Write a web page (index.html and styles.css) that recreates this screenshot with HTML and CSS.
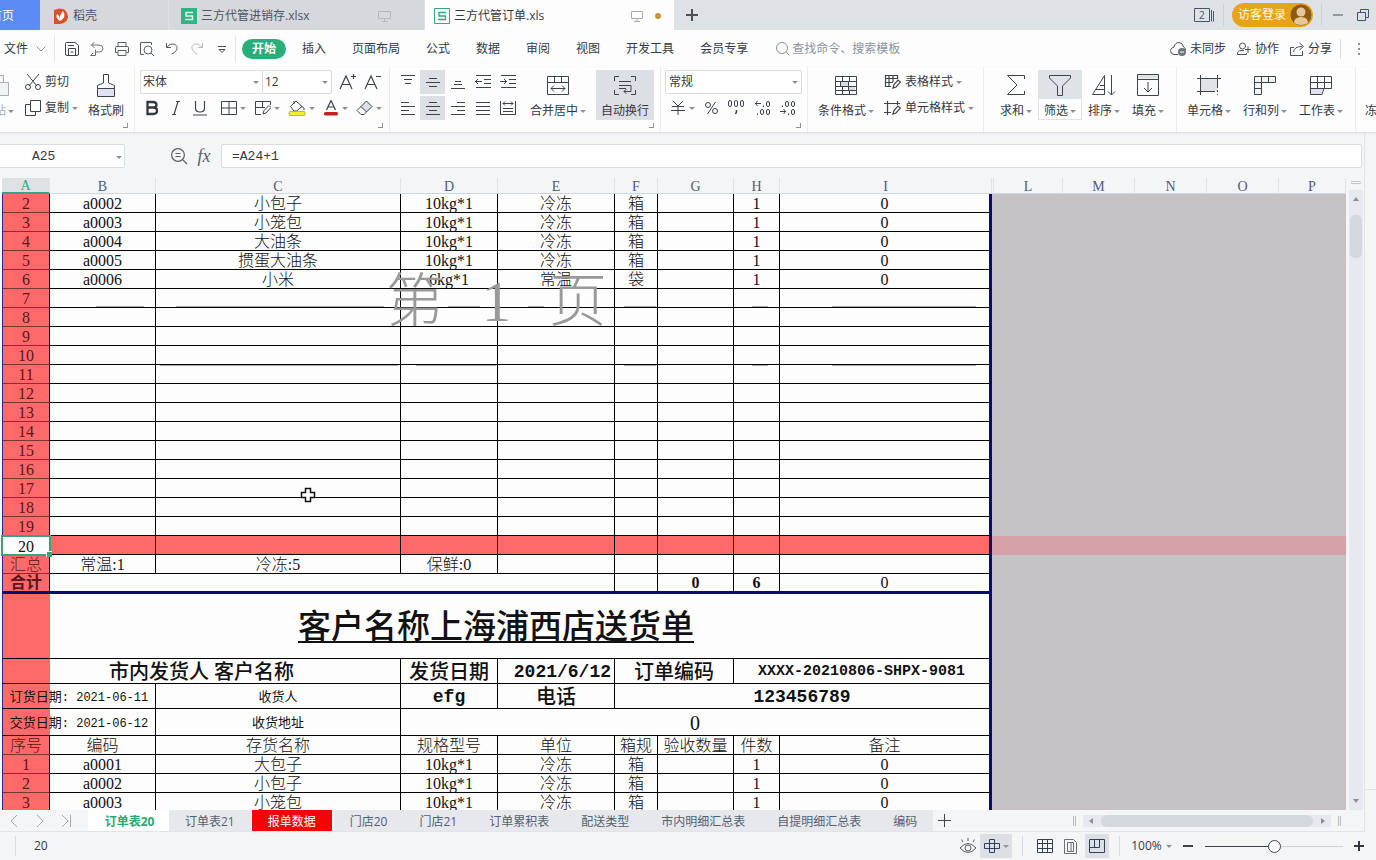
FILE: index.html
```html
<!DOCTYPE html>
<html lang="zh-CN">
<head>
<meta charset="utf-8">
<title>三方代管订单.xls</title>
<link rel="stylesheet" href="styles.css">
</head>
<body>
<header class="titlebar">
  <button class="doc-tab home">首页</button>
  <button class="doc-tab docer">
    <svg width="14" height="16" viewBox="0 0 14 16"><path d="M0 2Q7-1 11 2Q14 5 14 9Q13 15 6 16H0z" fill="#d9512c"/><path d="M6 13Q1 10 3 6Q6 8 6 13Q5 7 9 3Q13 9 6 13" fill="#fff"/></svg>
    <span>稻壳</span>
  </button>
  <button class="doc-tab book">
    <svg width="16" height="16" viewBox="0 0 16 16"><path d="M0 0H16V16H0z" fill="#2bb683"/><path d="M12 4.500H5V8H11.500V11.500H4" fill="none" stroke="#dff6ec" stroke-width="1.500"/></svg>
    <span>三方代管进销存.xlsx</span>
    <svg class="screen" width="13" height="12" viewBox="0 0 13 12"><path d="M.5 1.500H12.500V8.500H.5zM6.500 8.500V11M3.500 11.500H9.500" fill="none" stroke="#b3b8bf"/></svg>
  </button>
  <button class="doc-tab book current">
    <svg width="16" height="16" viewBox="0 0 16 16"><path d="M.5.500H15.500V15.500H.5z" fill="#f4fffa" stroke="#37a583"/><path d="M12 4.500H5V8H11.500V11.500H4" fill="none" stroke="#37a583" stroke-width="1.300"/></svg>
    <span>三方代管订单.xls</span>
    <svg class="screen" width="13" height="12" viewBox="0 0 13 12"><path d="M.5 1.500H11.500V8.500H.5zM6 8.500V11M3 11.500H9" fill="none" stroke="#a9adb3"/></svg>
    <i class="unsaved"></i>
  </button>
  <button class="icon-btn new-tab" aria-label="新建"><svg width="12" height="12" viewBox="0 0 12 12"><path d="M6 0V12M0 6H12" stroke="#4c5158" stroke-width="2"/></svg></button>
  <div class="window-tools">
    <button class="icon-btn" aria-label="窗口"><svg width="21" height="15" viewBox="0 0 21 15"><path d="M.5.500H15.500V13.500H.5zM17.500 2V13.500M19.500 3V13.500" fill="none" stroke="#4a5468"/><text x="5" y="11" font-size="10" fill="#4a5468">2</text></svg></button>
    <i class="rule short"></i>
    <button class="login">访客登录<svg width="22" height="22" viewBox="0 0 22 22"><circle cx="11" cy="11" r="10.500" fill="#8c5a10"/><circle cx="11" cy="8" r="4.500" fill="#e6c69a"/><path d="M4 19Q4 13 11 13Q18 13 18 19Q11 23 4 19" fill="#e6c69a"/></svg></button>
    <i class="rule short last"></i>
    <button class="icon-btn min" aria-label="最小化"><svg width="10" height="2"><path d="M0 1H10" stroke="#4c5158"/></svg></button>
    <button class="icon-btn restore" aria-label="还原"><svg width="12" height="12" viewBox="0 0 12 12"><path d="M.5 3.500H8.500V11.500H.5zM3.500 3V.5H11.500V8.500H9" fill="none" stroke="#44507a"/></svg></button>
  </div>
</header>

<nav class="menubar">
  <button class="menu file">文件<svg width="10" height="6" viewBox="0 0 10 6"><path d="M.5.500L5 5L9.500.5" fill="none" stroke="#9298a1"/></svg></button>
  <div class="quick">
    <button class="icon-btn" aria-label="保存"><svg width="16" height="16" viewBox="0 0 16 16"><path d="M1.500 4V2.500Q1.500 1.500 2.500 1.500H11L14.500 4.500V13Q14.500 14.500 13 14.500H3Q1.500 14.500 1.500 13zM4.500 14V7.500H11.500V14M4 4.500H10M6.500 11H9.500" fill="none" stroke="#3e444d"/></svg></button>
    <button class="icon-btn" aria-label="导出"><svg width="16" height="16" viewBox="0 0 16 16"><path d="M5.500 1L2.500 4L5.500 7M2.500 4H10Q14 4 14 7.500T10 11H6.500V8.500M6.500 11V14.500H1.500M4 12L1.500 14.500" fill="none" stroke="#6c7179"/></svg></button>
    <button class="icon-btn" aria-label="打印"><svg width="16" height="16" viewBox="0 0 16 16"><path d="M4 5V1.500H12V5M3.500 11.500H1.500V6.500Q1.500 5.500 3 5.500H13Q14.500 5.500 14.500 6.500V11.500H12.500M4 9.500H12V14.500H4z" fill="none" stroke="#5b6068"/></svg></button>
    <button class="icon-btn" aria-label="预览"><svg width="16" height="16" viewBox="0 0 16 16"><path d="M5 13.500H1.500V1.500H12.500V4M12 12L15 15" fill="none" stroke="#5b6068"/><circle cx="9" cy="9" r="4" fill="none" stroke="#5b6068"/></svg></button>
    <button class="icon-btn" aria-label="撤销"><svg width="16" height="16" viewBox="0 0 16 16"><path d="M2.500 2V6.500H7M2.500 6.500Q6 2 10 3Q14.500 5 12.500 9Q11 12 7.500 13" fill="none" stroke="#5b6068"/></svg></button>
    <button class="icon-btn" aria-label="恢复"><svg width="16" height="16" viewBox="0 0 16 16"><path d="M13.500 2V6.500H9M13.500 6.500Q10 2 6 3Q1.500 5 3.500 9Q5 12 8.500 13" fill="none" stroke="#b8bcc2"/></svg></button>
    <button class="icon-btn" aria-label="更多"><svg width="16" height="16" viewBox="0 0 16 16"><path d="M4 5.500H12M5 8.500L8 11.500L11 8.500z" fill="none" stroke="#4c5158"/></svg></button>
  </div>
  <button class="menu start">开始</button>
  <button class="menu">插入</button>
  <button class="menu">页面布局</button>
  <button class="menu">公式</button>
  <button class="menu">数据</button>
  <button class="menu">审阅</button>
  <button class="menu">视图</button>
  <button class="menu">开发工具</button>
  <button class="menu">会员专享</button>
  <label class="search"><svg width="14" height="14" viewBox="0 0 14 14"><circle cx="6" cy="6" r="5.500" fill="none" stroke="#8a909a"/><path d="M10 10L13.500 13.500" stroke="#8a909a"/></svg><input type="text" placeholder="查找命令、搜索模板" aria-label="查找命令"></label>
  <div class="share">
    <button class="menu"><svg width="17" height="14" viewBox="0 0 17 14"><path d="M8 12.500H4Q.5 12 .5 8.500Q1 5.500 4 5Q5 .5 9 .5Q13 1 13.500 5Q16 6 15.500 8.500" fill="none" stroke="#4c5158"/><circle cx="12" cy="10" r="4" fill="#6f747b"/><path d="M10 10H14" stroke="#fff"/></svg>未同步</button>
    <button class="menu"><svg width="15" height="14" viewBox="0 0 15 14"><circle cx="5.500" cy="4" r="3" fill="none" stroke="#4c5158"/><path d="M.5 12.500Q0 8.500 4 8.500H7M.5 12.500H9.500V11M11 4.500V11M8 7.500H14" fill="none" stroke="#4c5158"/></svg>协作</button>
    <button class="menu"><svg width="15" height="14" viewBox="0 0 15 14"><path d="M4 5.500H.5V13.500H12.500V9M3.500 10Q4 4.500 12 4.500M9.500 1L13.500 4.500L9.500 8" fill="none" stroke="#4c5158"/></svg>分享</button>
    <i class="rule"></i>
    <button class="icon-btn more" aria-label="更多选项"><svg width="4" height="12" viewBox="0 0 4 12"><path d="M1 0H3V2H1zM1 5H3V7H1zM1 10H3V12H1z" fill="#8a8f96"/></svg></button>
  </div>
</nav>

<section class="ribbon">
  <div class="group clipboard">
    <button class="big paste"><svg width="10" height="25" viewBox="0 0 10 25"><path d="M0 2.500H3.500V9M0 9.500H8.500V22.500H0" fill="#f1f2f4" stroke="#a9adb4"/></svg><span>贴<i class="caret"></i></span></button>
    <div class="stack">
      <button class="small"><svg width="16" height="16" viewBox="0 0 16 16"><path d="M2 0L12 12M14 0L4 12" stroke="#3e444d" fill="none"/><circle cx="3" cy="13" r="2.500" fill="none" stroke="#3e444d"/><circle cx="13" cy="13" r="2.500" fill="none" stroke="#3e444d"/></svg>剪切</button>
      <button class="small"><svg width="16" height="16" viewBox="0 0 16 16"><path d="M5.500.500H15.500V11.500H5.500zM5 4.500H.5V15.500H10.500V12" fill="none" stroke="#3e444d"/></svg>复制<i class="caret"></i></button>
    </div>
    <button class="big brush"><svg width="20" height="25" viewBox="0 0 20 25"><path d="M7.500 10V1.500H12.500V10L18.500 12.500V15.500H1.500V12.500z" fill="none" stroke="#3e444d"/><path d="M1.500 15.500H18.500V23.500H1.500z" fill="#dfe3f0" stroke="#3e444d"/></svg><span>格式刷</span></button>
    <i class="corner"></i>
  </div>

  <div class="group font">
    <div class="combos">
      <label class="combo face"><select aria-label="字体"><option>宋体</option></select><i class="caret"></i></label>
      <label class="combo size"><select aria-label="字号"><option>12</option></select><i class="caret"></i></label>
      <button class="icon-btn tool" aria-label="增大字号"><svg width="18" height="18" viewBox="0 0 18 18"><path d="M1 16L7 3L13 16M3.500 11.500H10.500M12 3.500H17M14.500 1V6" fill="none" stroke="#3e444d" stroke-width="1.200"/></svg></button>
      <button class="icon-btn tool" aria-label="减小字号"><svg width="18" height="18" viewBox="0 0 18 18"><path d="M1 16L7 3L13 16M3.500 11.500H10.500M12 3.500H17" fill="none" stroke="#3e444d" stroke-width="1.200"/></svg></button>
    </div>
    <div class="row formats">
      <button class="icon-btn glyph" aria-label="加粗"><svg width="14" height="16" viewBox="0 0 14 16"><path d="M2.500 2V14H8Q12 14 12 10.500Q12 7.500 8 7.500Q11.500 7.500 11.500 4.700Q11.500 2 8 2zM2.500 7.500H8" fill="none" stroke="#333942" stroke-width="2.300"/></svg></button>
      <button class="icon-btn glyph" aria-label="倾斜"><svg width="14" height="16" viewBox="0 0 14 16"><path d="M7 1.500H11M3 14.500H7M9 1.500L5 14.500" fill="none" stroke="#3e444d" stroke-width="1.200"/></svg></button>
      <button class="icon-btn glyph" aria-label="下划线"><svg width="16" height="16" viewBox="0 0 16 16"><path d="M3.500 1V8Q3.500 12 8 12T12.500 8V1M1 15H15" fill="none" stroke="#3e444d" stroke-width="1.200"/></svg></button>
      <button class="icon-btn drop" aria-label="边框"><svg width="16" height="16" viewBox="0 0 16 16"><path d="M.5 1.500H15.500V14.500H.5zM8 1V15M0 8H16" fill="none" stroke="#3e444d"/></svg><i class="caret"></i></button>
      <button class="icon-btn drop" aria-label="绘制边框"><svg width="16" height="16" viewBox="0 0 16 16"><path d="M15.500 5V1.500H.5V14.500H6M.5 7.500H10M7.500 1V8M8 14L9 10.500L14 5.500L16 7.500L11 13zM1 14.500H6" fill="none" stroke="#3e444d"/></svg><i class="caret"></i></button>
      <button class="icon-btn drop" aria-label="填充颜色"><svg width="18" height="16" viewBox="0 0 18 16"><path d="M2.500 6.500L8 1L14 6.500L8.500 11H6zM6 4V1M14 6.500Q17 8 16 10" fill="#fff" stroke="#3e444d"/><rect x="1" y="11.500" width="16" height="4" rx="1" fill="#eef02a" stroke="#8e912f" stroke-width=".6"/></svg><i class="caret"></i></button>
      <button class="icon-btn drop" aria-label="字体颜色"><svg width="16" height="16" viewBox="0 0 16 16"><path d="M3.500 10L8 .5L12.500 10M5 7H11" fill="none" stroke="#3e444d" stroke-width="1.200"/><rect x="1" y="12" width="14" height="3.500" rx="1.500" fill="#c81e1e"/></svg><i class="caret"></i></button>
      <button class="icon-btn drop" aria-label="清除"><svg width="17" height="16" viewBox="0 0 17 16"><path d="M5 6.500L10.500 1L16 6.500L10.500 12z" fill="#dcdfe3" stroke="#3e444d"/><path d="M5 6.500L1 10.500L5 14.500H8L10.500 12" fill="none" stroke="#3e444d"/></svg><i class="caret"></i></button>
    </div>
    <i class="corner"></i>
  </div>

  <div class="group align">
    <div class="align-grid">
      <button class="icon-btn" aria-label="顶端对齐"><svg width="16" height="16" viewBox="0 0 16 16"><path d="M1 1.500H15M4 5.500H12M5 9.500H11" stroke="#3e444d"/></svg></button>
      <button class="icon-btn on" aria-label="垂直居中"><svg width="16" height="16" viewBox="0 0 16 16"><path d="M4 4.500H12M1 8.500H15M4 12.500H12" stroke="#3e444d"/></svg></button>
      <button class="icon-btn" aria-label="底端对齐"><svg width="16" height="16" viewBox="0 0 16 16"><path d="M5 7.500H11M4 10.500H12M1 14.500H15" stroke="#3e444d"/></svg></button>
      <button class="icon-btn" aria-label="减少缩进"><svg width="16" height="16" viewBox="0 0 16 16"><path d="M1 1.500H16M9 5.500H16M9 9.500H16M1 13.500H16M0 7.500H7M3 5L.5 7.500L3 10" fill="none" stroke="#3e444d"/></svg></button>
      <button class="icon-btn" aria-label="增加缩进"><svg width="16" height="16" viewBox="0 0 16 16"><path d="M1 1.500H16M9 5.500H16M9 9.500H16M1 13.500H16M0 7.500H7M4 5L6.500 7.500L4 10" fill="none" stroke="#3e444d"/></svg></button>
      <button class="icon-btn" aria-label="左对齐"><svg width="16" height="16" viewBox="0 0 16 16"><path d="M1 2.500H9M1 6.500H15M1 10.500H9M1 14.500H15" stroke="#3e444d"/></svg></button>
      <button class="icon-btn on" aria-label="水平居中"><svg width="16" height="16" viewBox="0 0 16 16"><path d="M4 2.500H12M1 6.500H15M4 10.500H12M1 14.500H15" stroke="#3e444d"/></svg></button>
      <button class="icon-btn" aria-label="右对齐"><svg width="16" height="16" viewBox="0 0 16 16"><path d="M7 2.500H15M1 6.500H15M7 10.500H15M1 14.500H15" stroke="#3e444d"/></svg></button>
      <button class="icon-btn" aria-label="两端对齐"><svg width="16" height="16" viewBox="0 0 16 16"><path d="M1 2.500H15M1 6.500H15M1 10.500H15M1 14.500H15" stroke="#3e444d"/></svg></button>
      <button class="icon-btn" aria-label="分散对齐"><svg width="16" height="16" viewBox="0 0 16 16"><path d="M.5 1V15M15.500 1V15M3 3.500H13M5 1.500L3 3.500L5 5.500M11 1.500L13 3.500L11 5.500M3 8.500H13M3 11.500H13M1 14.500H15" fill="none" stroke="#3e444d"/></svg></button>
    </div>
    <button class="big merge"><svg width="22" height="25" viewBox="0 0 22 25"><path d="M.5 3.500H21.500V21.500H.5zM.5 9.500H21.500M7.500 3V9.500M14.500 3V9.500M4 15.500H18M7 12.500L4 15.500L7 18.500M15 12.500L18 15.500L15 18.500" fill="none" stroke="#3e444d"/></svg><span>合并居中<i class="caret"></i></span></button>
    <button class="big wrap on"><svg width="22" height="25" viewBox="0 0 22 25"><path d="M5 3.500H.5V8M17 3.500H21.500V8M5 21.500H.5V17M17 21.500H21.500V17M5 8.500H17M5 12.500H17V18.500H10M12.500 16L10 18.500L12.500 21M5 15.500H12" fill="none" stroke="#3e444d"/></svg><span>自动换行</span></button>
    <i class="corner"></i>
  </div>

  <div class="group number">
    <label class="combo style"><select aria-label="数字格式"><option>常规</option></select><i class="caret"></i></label>
    <div class="row numbers">
      <button class="icon-btn yen" aria-label="货币"><svg width="14" height="14" viewBox="0 0 14 14"><path d="M2 0L7 5L12 0M1 5.500H13M0 9.500H14M7 5V14" fill="none" stroke="#3e444d"/></svg><i class="caret"></i></button>
      <button class="icon-btn" aria-label="百分比"><svg width="13" height="14" viewBox="0 0 13 14"><circle cx="3" cy="4" r="2.500" fill="none" stroke="#3e444d"/><circle cx="10" cy="10" r="2.500" fill="none" stroke="#3e444d"/><path d="M10.500 1L2.500 13" stroke="#3e444d"/></svg></button>
      <button class="icon-btn" aria-label="千位分隔"><svg width="18" height="16" viewBox="0 0 18 16"><g fill="none" stroke="#3e444d"><rect x="1.500" y=".5" width="3" height="6" rx="1.500"/><rect x="7.500" y=".5" width="3" height="6" rx="1.500"/><rect x="13.500" y=".5" width="3" height="6" rx="1.500"/><path d="M9.500 10V12L8.500 14" stroke-width="1.500"/></g></svg></button>
      <button class="icon-btn" aria-label="增加小数"><svg width="16" height="16" viewBox="0 0 16 16"><g fill="none" stroke="#3e444d"><path d="M0 3.500H6M2.500 1L.5 3.500L2.500 6M8.500 5.500V7M2.500 13.500V15"/><rect x="11.500" y="1.500" width="3" height="5" rx="1.500"/><rect x="5.500" y="9.500" width="3" height="5" rx="1.500"/><rect x="11.500" y="9.500" width="3" height="5" rx="1.500"/></g></svg></button>
      <button class="icon-btn" aria-label="减少小数"><svg width="16" height="16" viewBox="0 0 16 16"><g fill="none" stroke="#3e444d"><path d="M2.500 5.500V7M0 11.500H6M3.500 9L5.500 11.500L3.500 14M8.500 13.500V15"/><rect x="5.500" y="1.500" width="3" height="5" rx="1.500"/><rect x="11.500" y="1.500" width="3" height="5" rx="1.500"/><rect x="11.500" y="9.500" width="3" height="5" rx="1.500"/></g></svg></button>
    </div>
    <i class="corner"></i>
  </div>

  <div class="group styles">
    <button class="big cond"><svg width="22" height="25" viewBox="0 0 22 25"><path d="M6 8.500H14V13.500H6zM14 13.500H20V17.500H14z" fill="#d9dde2"/><path d="M.5 3.500H21.500V21.500H.5zM.5 8.500H21.500M.5 13.500H21.500M.5 17.500H21.500M7.500 3V8.500M14.500 3V8.500M5.500 8.500V13.500M13.500 8.500V17.500M7.500 13.500V21M14.500 17.500V21" fill="none" stroke="#3e444d"/></svg><span>条件格式<i class="caret"></i></span></button>
    <div class="stack">
      <button class="small"><svg width="17" height="16" viewBox="0 0 17 16"><path d="M1 4.500H13M1 8.500H9M5 1V12M9 1V8M13.500 5V1.500H1.500V12.500H7M9 14L10 10.500L14 6L16.500 8L12 13z" fill="none" stroke="#3e444d" stroke-width="1.200"/></svg>表格样式<i class="caret"></i></button>
      <button class="small"><svg width="17" height="16" viewBox="0 0 17 16"><path d="M0 3.500H16M3.500 1V15M0 12.500H7M13.500 1V5M9 14L10 10.500L14 6L16.500 8L12 13z" fill="none" stroke="#3e444d" stroke-width="1.200"/></svg>单元格样式<i class="caret"></i></button>
    </div>
  </div>

  <div class="group edit">
    <button class="big"><svg width="22" height="25" viewBox="0 0 22 25"><path d="M19.500 6V2.500H2.500L12 12L2.500 21.500H19.500V18" fill="none" stroke="#3e444d"/></svg><span>求和<i class="caret"></i></span></button>
    <button class="big filter"><svg width="22" height="25" viewBox="0 0 22 25"><path d="M.5 2.500H21.500V5L13.500 13V22.500H8.500V13L.5 5z" fill="none" stroke="#3e444d"/></svg><span>筛选<i class="caret"></i></span></button>
    <button class="big"><svg width="24" height="25" viewBox="0 0 24 25"><path d="M.5 21.500L12.500 2.500V21.500zM8 12.500H12M4 16.500H12M19.500 2V22M16 18.500L19.500 22L23 18.500" fill="none" stroke="#3e444d"/></svg><span>排序<i class="caret"></i></span></button>
    <button class="big"><svg width="22" height="25" viewBox="0 0 22 25"><path d="M.5 1.500H21.500V5.500H.5z" fill="#dfe1e4"/><path d="M.5 1.500H21.500V22.500H.5zM.5 6.500H21.500M11 9V19M7 15L11 19L15 15" fill="none" stroke="#3e444d"/></svg><span>填充<i class="caret"></i></span></button>
  </div>

  <div class="group cells">
    <button class="big"><svg width="24" height="25" viewBox="0 0 24 25"><path d="M3.500 5.500H20.500V18.500H3.500z" fill="#e1e3e6"/><path d="M0 5.500H24M0 18.500H18M3.500 2V22M20.500 2V15M20.500 17V19M20.500 21V22" fill="none" stroke="#3e444d"/></svg><span>单元格<i class="caret"></i></span></button>
    <button class="big"><svg width="22" height="25" viewBox="0 0 22 25"><path d="M.5 3.500H21.500V9.500H7.500V21.500H.5zM.5 9.500H7.500M.5 15.500H7.500M7.500 3V9.500M14.500 3V9.500" fill="#f2f3f5" stroke="#3e444d"/></svg><span>行和列<i class="caret"></i></span></button>
    <button class="big"><svg width="22" height="25" viewBox="0 0 22 25"><path d="M1 16H13L12 21H1z" fill="#dfe3f0"/><path d="M.5 3.500H21.500V15.500H14L12 21.500H.5zM.5 9.500H21.500M.5 15.500H14M7.500 3V15.500M14.500 3V15.500" fill="none" stroke="#3e444d"/></svg><span>工作表<i class="caret"></i></span></button>
  </div>
  <div class="group freeze"><button class="big"><svg width="22" height="25"></svg><span>冻</span></button></div>
</section>

<div class="workspace">
  <main class="document">
    <div class="formula-bar">
      <label class="name-box"><input type="text" value="A25" aria-label="名称框"><i class="caret"></i></label>
      <button class="icon-btn find" aria-label="浏览公式结果"><svg width="17" height="17" viewBox="0 0 17 17"><circle cx="7" cy="7" r="6.400" fill="none" stroke="#59606b" stroke-width="1.200"/><path d="M12 12L16 16M4.500 5.500H9.500M4.500 8.500H9.500" stroke="#59606b" stroke-width="1.200"/></svg></button>
      <button class="icon-btn fx" aria-label="插入函数">fx</button>
      <input class="formula" type="text" value="=A24+1" aria-label="公式">
    </div>
    <div class="sheet-area">
      <div class="sheet">
        <table>
          <colgroup><col class="ca"><col class="cb"><col class="cc"><col class="cd"><col class="ce"><col class="cf"><col class="cg"><col class="ch"><col class="ci"><col class="ck"><col class="cl"><col class="cm"><col class="cm"><col class="cm"><col></colgroup>
          <thead><tr><th class="picked">A</th><th>B</th><th>C</th><th>D</th><th>E</th><th>F</th><th>G</th><th>H</th><th>I</th><th></th><th>L</th><th>M</th><th>N</th><th>O</th><th>P</th></tr></thead>
          <tbody>
            <tr><td class="a">2</td><td>a0002</td><td>小包子</td><td>10kg*1</td><td>冷冻</td><td>箱</td><td></td><td>1</td><td class="end">0</td><td class="out" colspan="6"></td></tr>
            <tr><td class="a">3</td><td>a0003</td><td>小笼包</td><td>10kg*1</td><td>冷冻</td><td>箱</td><td></td><td>1</td><td class="end">0</td><td class="out" colspan="6"></td></tr>
            <tr><td class="a">4</td><td>a0004</td><td>大油条</td><td>10kg*1</td><td>冷冻</td><td>箱</td><td></td><td>1</td><td class="end">0</td><td class="out" colspan="6"></td></tr>
            <tr><td class="a">5</td><td>a0005</td><td>掼蛋大油条</td><td>10kg*1</td><td>冷冻</td><td>箱</td><td></td><td>1</td><td class="end">0</td><td class="out" colspan="6"></td></tr>
            <tr><td class="a">6</td><td>a0006</td><td>小米</td><td>6kg*1</td><td>常温</td><td>袋</td><td></td><td>1</td><td class="end">0</td><td class="out" colspan="6"></td></tr>
            <tr><td class="a">7</td><td></td><td></td><td></td><td></td><td></td><td></td><td></td><td class="end"></td><td class="out" colspan="6"></td></tr>
            <tr><td class="a">8</td><td></td><td></td><td></td><td></td><td></td><td></td><td></td><td class="end"></td><td class="out" colspan="6"></td></tr>
            <tr><td class="a">9</td><td></td><td></td><td></td><td></td><td></td><td></td><td></td><td class="end"></td><td class="out" colspan="6"></td></tr>
            <tr><td class="a">10</td><td></td><td></td><td></td><td></td><td></td><td></td><td></td><td class="end"></td><td class="out" colspan="6"></td></tr>
            <tr><td class="a">11</td><td></td><td></td><td></td><td></td><td></td><td></td><td></td><td class="end"></td><td class="out" colspan="6"></td></tr>
            <tr><td class="a">12</td><td></td><td></td><td></td><td></td><td></td><td></td><td></td><td class="end"></td><td class="out" colspan="6"></td></tr>
            <tr><td class="a">13</td><td></td><td></td><td></td><td></td><td></td><td></td><td></td><td class="end"></td><td class="out" colspan="6"></td></tr>
            <tr><td class="a">14</td><td></td><td></td><td></td><td></td><td></td><td></td><td></td><td class="end"></td><td class="out" colspan="6"></td></tr>
            <tr><td class="a">15</td><td></td><td></td><td></td><td></td><td></td><td></td><td></td><td class="end"></td><td class="out" colspan="6"></td></tr>
            <tr><td class="a">16</td><td></td><td></td><td></td><td></td><td></td><td></td><td></td><td class="end"></td><td class="out" colspan="6"></td></tr>
            <tr><td class="a">17</td><td></td><td></td><td></td><td></td><td></td><td></td><td></td><td class="end"></td><td class="out" colspan="6"></td></tr>
            <tr><td class="a">18</td><td></td><td></td><td></td><td></td><td></td><td></td><td></td><td class="end"></td><td class="out" colspan="6"></td></tr>
            <tr><td class="a">19</td><td></td><td></td><td></td><td></td><td></td><td></td><td></td><td class="end"></td><td class="out" colspan="6"></td></tr>
            <tr class="marked"><td class="a active">20</td><td></td><td></td><td></td><td></td><td></td><td></td><td></td><td class="end"></td><td class="out" colspan="6"></td></tr>
            <tr><td class="a">汇总</td><td>常温:1</td><td>冷冻:5</td><td>保鲜:0</td><td></td><td></td><td></td><td></td><td class="end"></td><td class="out" colspan="6"></td></tr>
            <tr class="total"><td class="a strong">合计</td><td colspan="4"></td><td></td><td class="strong">0</td><td class="strong">6</td><td class="end">0</td><td class="out" colspan="6"></td></tr>
            <tr class="title"><td class="over end" colspan="9"><u>客户名称上海浦西店送货单</u></td><td class="out" colspan="6"></td></tr>
            <tr class="info"><td class="over head" colspan="3">市内发货人 客户名称</td><td class="head">发货日期</td><td class="figure flush">2021/6/12</td><td class="head" colspan="2">订单编码</td><td class="code end" colspan="2">XXXX-20210806-SHPX-9081</td><td class="out" colspan="6"></td></tr>
            <tr class="info"><td class="over note" colspan="2">订货日期<span>: 2021-06-11</span></td><td class="note">收货人</td><td class="figure">efg</td><td class="head">电话</td><td class="figure end" colspan="4">123456789</td><td class="out" colspan="6"></td></tr>
            <tr class="info address"><td class="over note" colspan="2">交货日期<span>: 2021-06-12</span></td><td class="note">收货地址</td><td class="zero end" colspan="6">0</td><td class="out" colspan="6"></td></tr>
            <tr><td class="a">序号</td><td>编码</td><td>存货名称</td><td>规格型号</td><td>单位</td><td>箱规</td><td>验收数量</td><td>件数</td><td class="end">备注</td><td class="out" colspan="6"></td></tr>
            <tr><td class="a">1</td><td>a0001</td><td>大包子</td><td>10kg*1</td><td>冷冻</td><td>箱</td><td></td><td>1</td><td class="end">0</td><td class="out" colspan="6"></td></tr>
            <tr><td class="a">2</td><td>a0002</td><td>小包子</td><td>10kg*1</td><td>冷冻</td><td>箱</td><td></td><td>1</td><td class="end">0</td><td class="out" colspan="6"></td></tr>
            <tr><td class="a">3</td><td>a0003</td><td>小笼包</td><td>10kg*1</td><td>冷冻</td><td>箱</td><td></td><td>1</td><td class="end">0</td><td class="out" colspan="6"></td></tr>
          </tbody>
        </table>
        <div class="watermark"><span>第</span><span>1</span><span>页</span></div>
        <svg class="traces" width="980" height="64" viewBox="0 0 980 64"><path d="M96 2.500H144M176 2.500H384M448 2.500H480M528 2.500H544M624 2.500H656M752 2.500H768M832 2.500H976M160 61.500H398M416 61.500H496M624 61.500H656M752 61.500H768M832 61.500H976" stroke="#a3a3a3"/></svg>
        <svg class="pointer" width="16" height="16" viewBox="0 0 16 16"><path d="M5.500 1.500H10.500V5.500H14.500V10.500H10.500V14.500H5.500V10.500H1.500V5.500H5.500z" fill="#fff" stroke="#111" stroke-width="1.500"/></svg>
      </div>
      <div class="vscroll">
        <i class="split"></i>
        <div class="track"><i class="tri up"></i><i class="thumb"></i><i class="tri down"></i></div>
      </div>
    </div>
    <div class="sheet-tabs">
      <div class="tab-nav">
        <button class="icon-btn" aria-label="上一个"><svg width="12" height="12" viewBox="0 0 12 12"><path d="M9 0L3 6L9 12" fill="none" stroke="#a3a8af"/></svg></button>
        <button class="icon-btn" aria-label="下一个"><svg width="12" height="12" viewBox="0 0 12 12"><path d="M3 0L9 6L3 12" fill="none" stroke="#a3a8af"/></svg></button>
        <button class="icon-btn" aria-label="最后"><svg width="12" height="12" viewBox="0 0 12 12"><path d="M2 0L8 6L2 12M10.500 0V12" fill="none" stroke="#a3a8af"/></svg></button>
      </div>
      <button class="stab selected">订单表20</button>
      <button class="stab">订单表21</button>
      <button class="stab red">报单数据</button>
      <button class="stab">门店20</button>
      <button class="stab">门店21</button>
      <button class="stab">订单累积表</button>
      <button class="stab">配送类型</button>
      <button class="stab">市内明细汇总表</button>
      <button class="stab">自提明细汇总表</button>
      <button class="stab">编码</button>
      <button class="icon-btn add" aria-label="新建工作表"><svg width="13" height="13" viewBox="0 0 13 13"><path d="M6.500 0V13M0 6.500H13" stroke="#3e444d"/></svg></button>
      <div class="hscroll">
        <i class="grip"></i>
        <div class="track"><i class="tri prev"></i><i class="thumb"></i><i class="tri next"></i></div>
        <i class="grip"></i>
      </div>
    </div>
  </main>
  <aside class="side"><i></i></aside>
</div>

<footer class="status">
  <i class="rule"></i>
  <output>20</output>
  <div class="views">
    <button class="icon-btn eye" aria-label="护眼模式"><svg width="18" height="16" viewBox="0 0 18 16"><path d="M1 10Q9 1 17 10Q9 19 1 10zM9 3V0M4 4L2.500 1.500M14 4L15.500 1.500" fill="none" stroke="#59606b"/><circle cx="9" cy="10" r="3" fill="none" stroke="#59606b"/></svg></button>
    <button class="icon-btn on wide" aria-label="阅读模式"><svg width="16" height="14" viewBox="0 0 16 14"><path d="M5.500.500H10.500V13.500H5.500zM.5 4.500H15.500V9.500H.5z" fill="none" stroke="#2f3f5c"/></svg><i class="caret"></i></button>
    <i class="rule"></i>
    <button class="icon-btn" aria-label="普通视图"><svg width="16" height="14" viewBox="0 0 16 14"><path d="M.5.500H15.500V13.500H.5zM0 4.500H16M0 9.500H16M5.500 0V14M10.500 0V14" fill="none" stroke="#2f3f5c"/></svg></button>
    <button class="icon-btn" aria-label="页面视图"><svg width="14" height="15" viewBox="0 0 14 15"><path d="M.5.500H9.500L12.500 3.500V14.500H.5zM3.500 3.500H7V12.500H3.500zM7 3.500H9.500V12.500H7" fill="none" stroke="#6a6f78"/></svg></button>
    <button class="icon-btn on" aria-label="分页预览"><svg width="16" height="14" viewBox="0 0 16 14"><path d="M.5.500H15.500V13.500H.5zM.5 8.500H10.500M5.500 0V8.500M10.500 0V8.500" fill="none" stroke="#2f3f5c"/></svg></button>
    <i class="rule"></i>
    <button class="icon-btn zoom">100%<i class="caret"></i></button>
    <button class="icon-btn" aria-label="缩小"><svg width="10" height="10"><path d="M0 5H10" stroke="#3e444d" stroke-width="2"/></svg></button>
    <input type="range" min="0" max="100" value="50" aria-label="缩放">
    <button class="icon-btn" aria-label="放大"><svg width="10" height="10"><path d="M0 5H10M5 0V10" stroke="#333942" stroke-width="2"/></svg></button>
  </div>
</footer>
</body>
</html>
```
FILE: styles.css
```css
* { box-sizing: border-box; }
body {
  margin: 0;
  height: 100vh;
  display: flex;
  flex-direction: column;
  overflow: hidden;
  background: #f4f5f7;
  color: #343a44;
  font: 12px/16px "Open Sans", "Noto Sans CJK SC", sans-serif;
}
button, input, select { font: inherit; color: inherit; margin: 0; padding: 0; border: 0; background: none; border-radius: 0; }
button { display: flex; align-items: center; white-space: nowrap; }
svg { display: block; flex: none; }
i { flex: none; }
.icon-btn { justify-content: center; }
.caret { display: inline-block; border: 3px solid transparent; border-top: 3px solid #8c9199; border-bottom: 0; }
.rule { width: 1px; height: 20px; background: #d9dce0; }

/* Title bar */
.titlebar { display: flex; flex: none; height: 30px; background: #dfe2e4; }
.doc-tab { padding-top: 2px; background: #d6d8dc; color: #4b5468; }
.doc-tab.home { width: 40px; padding-right: 26px; justify-content: flex-end; overflow: hidden; background: #5b8cf6; color: #fff; }
.docer { width: 128px; padding-left: 14px; gap: 5px; }
.book { width: 256px; padding: 2px 33px 0 12px; gap: 4px; border-left: 1px solid #dfe2e4; }
.book.current { width: 250px; padding: 2px 13px 0 9px; background: #fdfdfe; color: #343a44; }
.screen { margin-left: auto; }
.unsaved { width: 6px; height: 6px; margin-left: 7px; border-radius: 50%; background: #c4963a; }
.new-tab { width: 36px; }
.window-tools { display: flex; align-items: center; margin-left: auto; }
.rule.short { height: 22px; margin: 0 8px; background: #cdd1d5; }
.rule.last { margin-right: 4px; }
.login { height: 24px; gap: 4px; padding: 0 1px 0 6px; border-radius: 12px; background: #e9a31b; color: #fffbe8; }
.min { width: 24px; height: 30px; }
.restore { width: 26px; height: 30px; }

/* Menu bar */
.menubar { display: flex; flex: none; align-items: center; height: 37px; padding-top: 1px; background: #fdfdfe; }
.file { width: 55px; height: 26px; padding-left: 4px; gap: 8px; border-right: 1px solid #e3e5e8; }
.quick { display: flex; height: 26px; padding: 0 1px 0 4px; border-right: 1px solid #e3e5e8; }
.quick .icon-btn { width: 25px; }
.menubar > .menu:not(.file) { padding: 0 13px; }
.menubar > .start.menu:not(.file) { height: 20px; margin: 0 3px 0 6px; padding: 0 10px; border-radius: 10px; background: #2aae79; color: #fff; font-weight: 600; }
.search { display: flex; align-items: center; gap: 2px; margin-left: 15px; }
.search input { width: 130px; outline: 0; }
.search input::placeholder { color: #8a93a3; opacity: 1; }
.share { display: flex; align-items: center; gap: 11px; margin-left: auto; }
.share .menu { gap: 3px; }
.share .rule { margin-left: -3px; }
.more { width: 24px; height: 20px; padding-right: 10px; }

/* Ribbon */
.ribbon { display: flex; flex: none; height: 65px; background: #fdfdfe; box-shadow: 0 1px 2px #d3d6da; position: relative; }
.group { display: flex; flex: none; align-items: flex-start; padding-top: 3px; border-right: 1px solid #eaecef; position: relative; }
.corner { position: absolute; right: 6px; bottom: 4px; width: 5px; height: 5px; border: solid #8c9199; border-width: 0 1px 1px 0; }
.big { flex-direction: column; height: 50px; padding-top: 3px; gap: 3px; }
.big span { display: flex; align-items: center; gap: 2px; line-height: 20px; }
.small { height: 24px; gap: 4px; }
.small .caret { margin-left: -1px; }
.stack, .font, .number { display: flex; flex-direction: column; gap: 2px; }
.row { display: flex; align-items: center; height: 24px; }

.clipboard { width: 135px; }
.paste { width: 14px; align-items: flex-end; color: #a9adb4; }
.paste svg { align-self: flex-start; }
.clipboard .stack { width: 63px; margin-left: 11px; }
.brush { width: 36px; }
.font { width: 255px; padding-left: 5px; }
.combos { display: flex; }
.combo { display: grid; height: 24px; align-items: center; border: 1px solid #d9dce0; border-radius: 2px; background: #fff; }
.combo select, .combo .caret { grid-area: 1 / 1; }
.combo select { width: 100%; height: 22px; padding-left: 2px; appearance: none; outline: 0; }
.combo .caret { justify-self: end; margin-right: 3px; pointer-events: none; }
.face { width: 122px; border-right: 0; border-radius: 2px 0 0 2px; }
.size { width: 70px; border-radius: 0 2px 2px 0; margin-right: 3px; }
.tool { width: 25px; height: 24px; }
.formats .icon-btn { height: 24px; }
.glyph { width: 24px; }
.drop { width: 34px; gap: 3px; }
.drop:nth-of-type(4) { margin-left: 4px; }
.align { width: 271px; padding-left: 5px; }
.align-grid { display: grid; grid-template-columns: repeat(5, 25px); row-gap: 2px; }
.align-grid .icon-btn { height: 24px; }
.on { background: #dcdfe4; }
.merge { width: 76px; }
.wrap { width: 58px; }
.number { width: 147px; padding-left: 4px; }
.style { width: 137px; }
.style select { padding-left: 3px; }
.numbers { justify-content: space-between; width: 131px; padding-left: 6px; }
.yen { gap: 4px; }
.styles { width: 176px; }
.cond { width: 76px; }
.edit { width: 193px; padding-left: 10px; }
.edit .big { width: 44px; }
.edit .filter { background: linear-gradient(#dfe2e7 28px, #fff 28px); border: 1px solid #dfe2e7; padding-top: 2px; }
.cells { width: 179px; padding-left: 4px; }
.cells .big { width: 56px; }
.freeze { padding-left: 9px; border: 0; }
.freeze .big { align-items: flex-start; }

/* Workspace */
.workspace { display: flex; flex: 1; min-height: 0; }
.document { display: flex; flex: 1; flex-direction: column; min-width: 0; }
.side { display: flex; flex-direction: column; justify-content: flex-end; width: 12px; border-left: 1px solid #dfe2e6; }
.side i { height: 43px; border-top: 1px solid #dfe2e6; }
.formula-bar { display: flex; flex: none; align-items: center; height: 46px; padding: 2px 2px 0 0; font-family: "Liberation Mono", "Noto Sans CJK SC", monospace; font-size: 13px; }
.name-box { display: flex; align-items: center; width: 125px; height: 24px; padding: 2px 2px 0 0; border: 1px solid #d9dce0; border-left: 0; border-radius: 0 2px 2px 0; background: #fff; }
.name-box input { width: 100%; min-width: 0; padding-left: 32px; outline: 0; }
.find { width: 24px; margin-left: 42px; }
.fx { width: 24px; margin: 0 3px 0 1px; font: italic 18px/20px "Liberation Serif", serif; color: #59606b; }
.formula { flex: 1; min-width: 0; height: 24px; margin-left: 2px; padding-left: 10px; border: 1px solid #d9dce0; border-radius: 2px; background: #fff; outline: 0; }

/* Sheet */
.sheet-area { display: flex; flex: 1; min-height: 0; }
.sheet { position: relative; flex: 1; min-width: 0; padding-left: 2px; overflow: hidden; background: #fdfdfe; }
table { width: 100%; table-layout: fixed; border-collapse: separate; border-spacing: 0; color: #111; font: 300 16px/16px "Liberation Serif", "Noto Sans CJK SC", serif; }
.ca { width: 48px; } .cb { width: 106px; } .cc { width: 245px; } .cd { width: 97px; } .ce { width: 117px; }
.cf { width: 43px; } .cg { width: 76px; } .ch { width: 46px; } .ci { width: 212px; }
.ck { width: 2px; } .cl { width: 69px; } .cm { width: 72px; }
thead th { height: 16px; padding: 1px 0 0; overflow: hidden; background: #f4f5f7; border-right: 1px solid #dfe2e6; border-bottom: 1px solid #cfd8e0; color: #4d5d73; font: 14px/13px "Liberation Serif", serif; }
thead .picked { background: #dfe2e5; border-bottom: 2px solid #36a57c; color: #36a57c; }
tbody tr { height: 19px; }
td { height: 19px; padding: 2px 0 0; border: solid #000; border-width: 0 1px 1px 0; text-align: center; white-space: nowrap; line-height: 16px; background: #fdfdfe; }
.a { border-left: 1px solid #33209a; border-bottom-color: #7c3436; background: #ff6969; color: #5a1718; }
.end { border-right: 3px solid #0a0a73; }
td.out { border: 0; background: #c4c2c5; }
.marked td { background: #ff6969; }
.marked td.out { background: #d5a0a6; }
.marked td.active { position: relative; background: #fff; color: #111; border: 0; outline: 2px solid #36a57c; outline-offset: -1px; }
.active::after { content: ""; position: absolute; right: -2px; bottom: -2px; width: 5px; height: 5px; background: #36a57c; border: solid #fff; border-width: 1px 0 0 1px; }
.strong { font-weight: 700; }
.total, .total td { height: 20px; }
.total td { padding-top: 1px; border-bottom: 3px solid #0a0a73; }
.total td.out { border: 0; }
.over { border-left: 1px solid #33209a; background: linear-gradient(90deg, #ff6969 47px, #fdfdfe 47px); }
.title, .title td { height: 65px; }
.title td.over { font-size: 33px; line-height: 40px; font-weight: 500; }
u { text-decoration-thickness: 2px; text-underline-offset: 3px; }
.info, .info td { height: 25px; }
.address, .address td { height: 27px; }
.info td { line-height: 22px; }
.info .head { font-size: 20px; font-weight: 500; }
.info .figure { font: 700 18px/22px "Liberation Mono", monospace; }
.info .flush { text-align: right; padding-right: 3px; }
.info .code { font: 700 15px/22px "Liberation Mono", monospace; }
.info .note { font-size: 13px; font-weight: 400; }
.note span { font: 12px/20px "Liberation Mono", monospace; }
.info .zero { font-size: 20px; }
.watermark { position: absolute; left: 386px; top: 84px; display: flex; gap: 38px; color: #999; font: 300 58px/80px "Liberation Serif", "Noto Sans CJK SC", serif; pointer-events: none; }
.traces { position: absolute; left: 0; top: 126px; pointer-events: none; }
.pointer { position: absolute; left: 300px; top: 309px; pointer-events: none; }

/* Scroll bars */
.vscroll { display: flex; flex-direction: column; align-items: center; width: 18px; padding-left: 2px; background: #f4f5f7; }
.split { width: 10px; height: 3px; margin: 3px 0 6px; border: solid #c3c6cc; border-width: 1px 0; }
.track { display: flex; flex: 1; align-items: center; background: #e8e9ee; }
.vscroll .track { flex-direction: column; width: 14px; padding: 7px 0; }
.vscroll .thumb { width: 12px; height: 43px; margin-top: 14px; border-radius: 5px; background: #d4d7de; }
.tri { border: 3px solid transparent; }
.up { border-bottom: 4px solid #8c909c; border-top: 0; }
.down { border-top: 4px solid #8c909c; border-bottom: 0; margin-top: auto; }
.prev { border-right: 4px solid #8c909c; border-left: 0; }
.next { border-left: 4px solid #8c909c; border-right: 0; }

/* Sheet tabs */
.sheet-tabs { display: flex; flex: none; height: 22px; border-bottom: 1px solid #e2e4e8; }
.tab-nav { display: flex; width: 88px; padding-left: 1px; }
.tab-nav .icon-btn { width: 26px; }
.stab { flex: none; padding: 2px 16px 0; background: #e6e8eb; color: #555f74; }
.stab.selected { width: 81px; padding: 2px 0 0 2px; justify-content: center; background: #fff; color: #2aa873; font-weight: 700; }
.stab.red { margin: 0 2px 0 1px; background: #f30505; color: #fff; }
.add { width: 22px; }
.hscroll { display: flex; align-items: center; gap: 7px; width: 268px; margin: 0 23px 0 auto; }
.hscroll .track { height: 12px; padding: 0 6px; }
.hscroll .thumb { flex: 1; height: 12px; margin: 0 8px; border-radius: 6px; background: #d4d7de; }
.grip { width: 3px; height: 10px; border: solid #b9bcc3; border-width: 0 1px; }

/* Status bar */
.status { display: flex; flex: none; align-items: center; height: 28px; padding: 0 11px 0 15px; }
.status output { margin-left: 18px; }
.views { display: flex; align-items: center; margin-left: auto; }
.views .icon-btn { width: 24px; height: 24px; margin-right: 2px; }
.views .icon-btn.eye { margin-right: 0; }
.views .icon-btn.wide { width: 32px; gap: 3px; margin-right: 10px; }
.views .rule { margin-right: 10px; }
.views .icon-btn.zoom { width: 43px; gap: 4px; margin-right: 3px; }
.views .rule:nth-of-type(2) { margin-left: 8px; }
.views .icon-btn:last-child { width: 12px; margin: 0 0 0 10px; }
input[type="range"] { width: 138px; height: 16px; margin-left: 3px; appearance: none; background: linear-gradient(90deg, #3e444d 50%, #cfd2d7 50%) center / 100% 1px no-repeat; }
input[type="range"]::-webkit-slider-thumb { appearance: none; width: 13px; height: 13px; border: 1px solid #3e444d; border-radius: 50%; background: #fdfdfe; }
```
